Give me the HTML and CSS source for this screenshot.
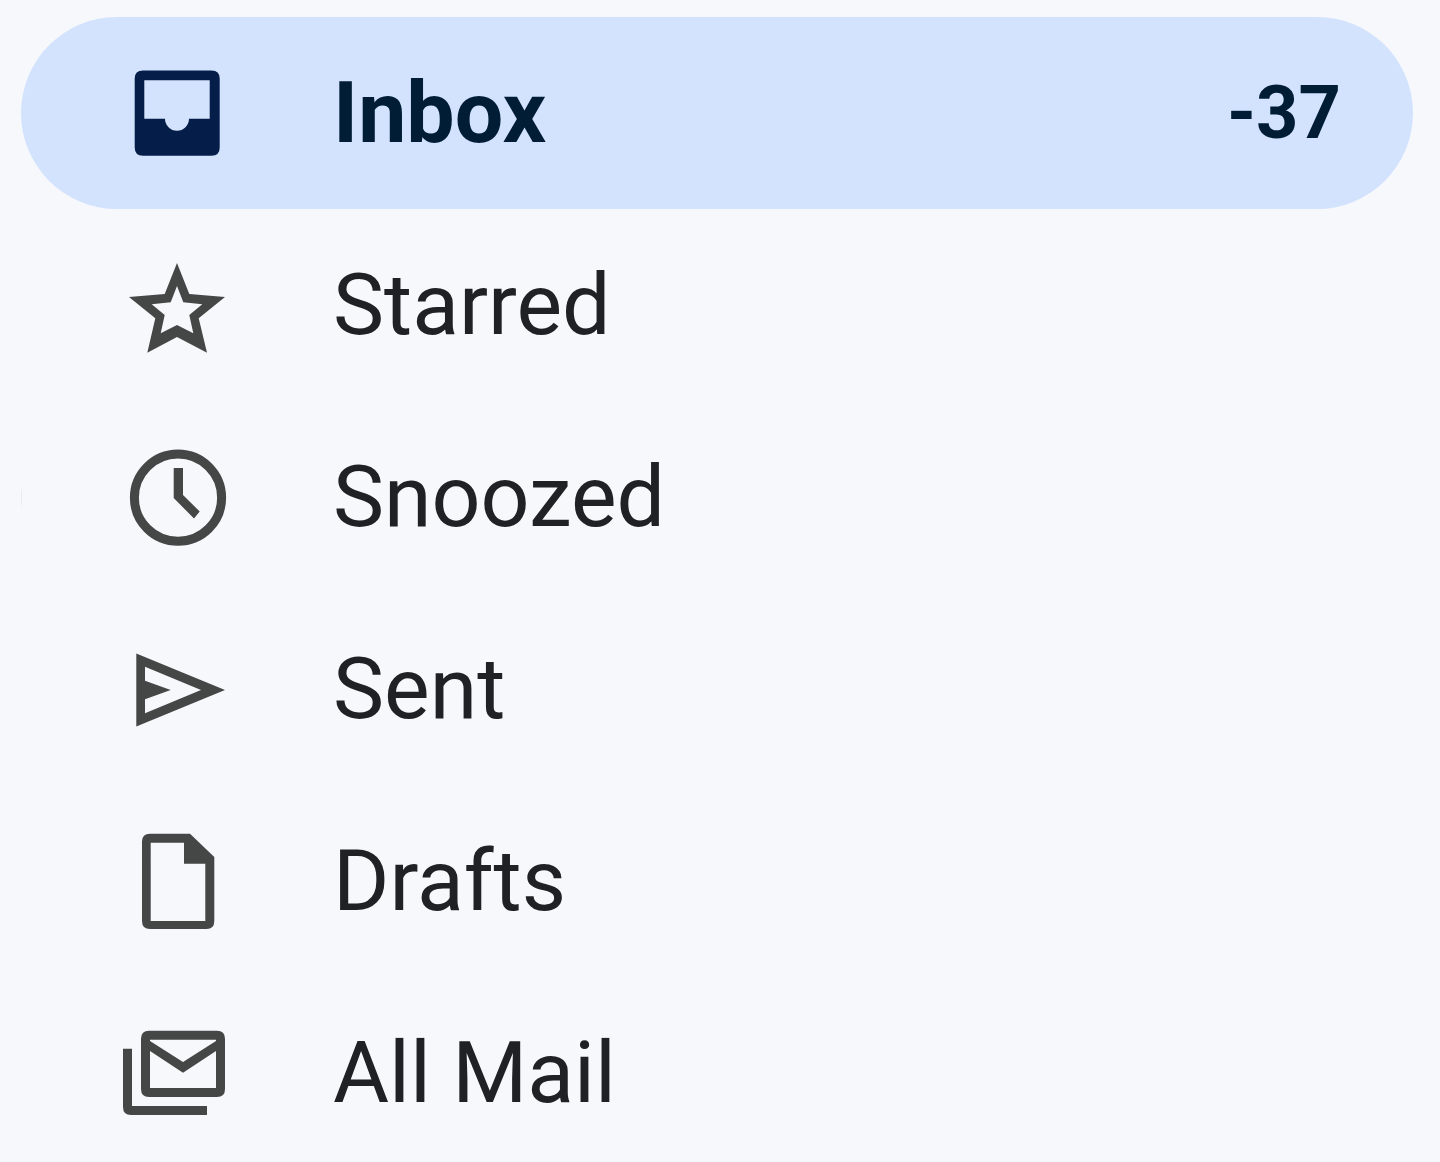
FILE: index.html
```html
<!DOCTYPE html>
<html lang="en">
<head>
    <meta charset="UTF-8">
    <meta name="viewport" content="width=device-width, initial-scale=1.0">
    <title>Mail</title>
    <link rel="stylesheet" href="styles.css">
</head>
<body>
    <nav class="sidebar" aria-label="Mailboxes">
        <a href="#inbox" class="item active" aria-current="page">
            <svg class="icon" viewBox="0 0 120 120" aria-hidden="true">
                <path fill-rule="evenodd" d="M26 17.5H94.5Q102.7 17.5 102.7 25.5V94.5Q102.7 102.7 94.5 102.7H26Q17.7 102.7 17.7 94.5V25.5Q17.7 17.5 26 17.5ZM27.3 27.3V65.7H48A12 12 0 0 0 72 65.7H92.7V27.3Z"/>
            </svg>
            <span class="label">Inbox</span>
            <span class="count">-37</span>
        </a>
        <a href="#starred" class="item">
            <svg class="icon" viewBox="0 0 120 120" aria-hidden="true">
                <path fill-rule="evenodd" d="M60 18L72.3 49L108 52L81.7 73.3L90 107.7L60 92L30.3 107.7L38.3 73.3L12 52L47.7 49ZM60 41L53.7 57.3L34.7 59.3L47.7 70L43.7 88.3L60 80L76.3 88.3L72.3 70L85.3 59.3L66.3 57.3Z"/>
            </svg>
            <span class="label">Starred</span>
        </a>
        <a href="#snoozed" class="item marked">
            <svg class="icon" viewBox="0 0 120 120" aria-hidden="true">
                <circle class="ring" cx="61" cy="60.7" r="43.6"/>
                <path d="M56.7 31H66V58L82.7 74.5L77 81.5L56.7 61Z"/>
            </svg>
            <span class="label">Snoozed</span>
        </a>
        <a href="#sent" class="item">
            <svg class="icon" viewBox="0 0 120 120" aria-hidden="true">
                <path fill-rule="evenodd" d="M19.3 24.5L108 61L19.3 97.5ZM28 37.7V51.7L53.7 61L28 70.3V84.3L84 61Z"/>
            </svg>
            <span class="label">Sent</span>
        </a>
        <a href="#drafts" class="item">
            <svg class="icon" viewBox="0 0 120 120" aria-hidden="true">
                <path fill-rule="evenodd" d="M33 12.7H73L97.3 36V100Q97.3 108 89.5 108H33Q25 108 25 100V20.5Q25 12.7 33 12.7ZM33.7 21.7V100H88.3V42.7H67V21.7Z"/>
            </svg>
            <span class="label">Drafts</span>
        </a>
        <a href="#all" class="item">
            <svg class="icon" viewBox="0 0 120 120" aria-hidden="true">
                <path d="M6 35.7H15V93H90V102H14Q6 102 6 94Z"/>
                <path fill-rule="evenodd" d="M32 17.7H100Q108 17.7 108 25.7V76Q108 84 100 84H32Q24 84 24 76V25.7Q24 17.7 32 17.7ZM33 38V75H99V38L66 59.7ZM33 26.7V28L66 49L99 28V26.7Z"/>
            </svg>
            <span class="label">All Mail</span>
        </a>
    </nav>
</body>
</html>
```
FILE: styles.css
```css
* {
    margin: 0;
    padding: 0;
    box-sizing: border-box;
}

body {
    font-family: Roboto, sans-serif;
    background: #f6f8fc;
    color: #202124;
}

.sidebar {
    height: 100vh;
    padding: 17px 27px 0 21px;
    overflow: hidden;
}

.item {
    display: flex;
    align-items: center;
    gap: 96px;
    height: 192px;
    padding: 0 72px 0 96px;
    border-radius: 96px;
    color: inherit;
    text-decoration: none;
}

.active {
    background: #d3e3fd;
    color: #001d35;
    font-weight: 700;
}

/* faint hairline on the left edge */
.marked {
    border-radius: 0;
    background: linear-gradient(transparent, #e6e8ec, transparent) left center / 1px 28px no-repeat;
}

.icon {
    flex: none;
    width: 120px;
    height: 120px;
    fill: #444746;
}

.active .icon {
    fill: #041e49;
}

.ring {
    fill: none;
    stroke: #444746;
    stroke-width: 9;
}

.label {
    flex: 1;
    font-size: 86px;
    line-height: 96px;
    white-space: nowrap;
}

.count {
    font-size: 74px;
    line-height: 96px;
}
```
